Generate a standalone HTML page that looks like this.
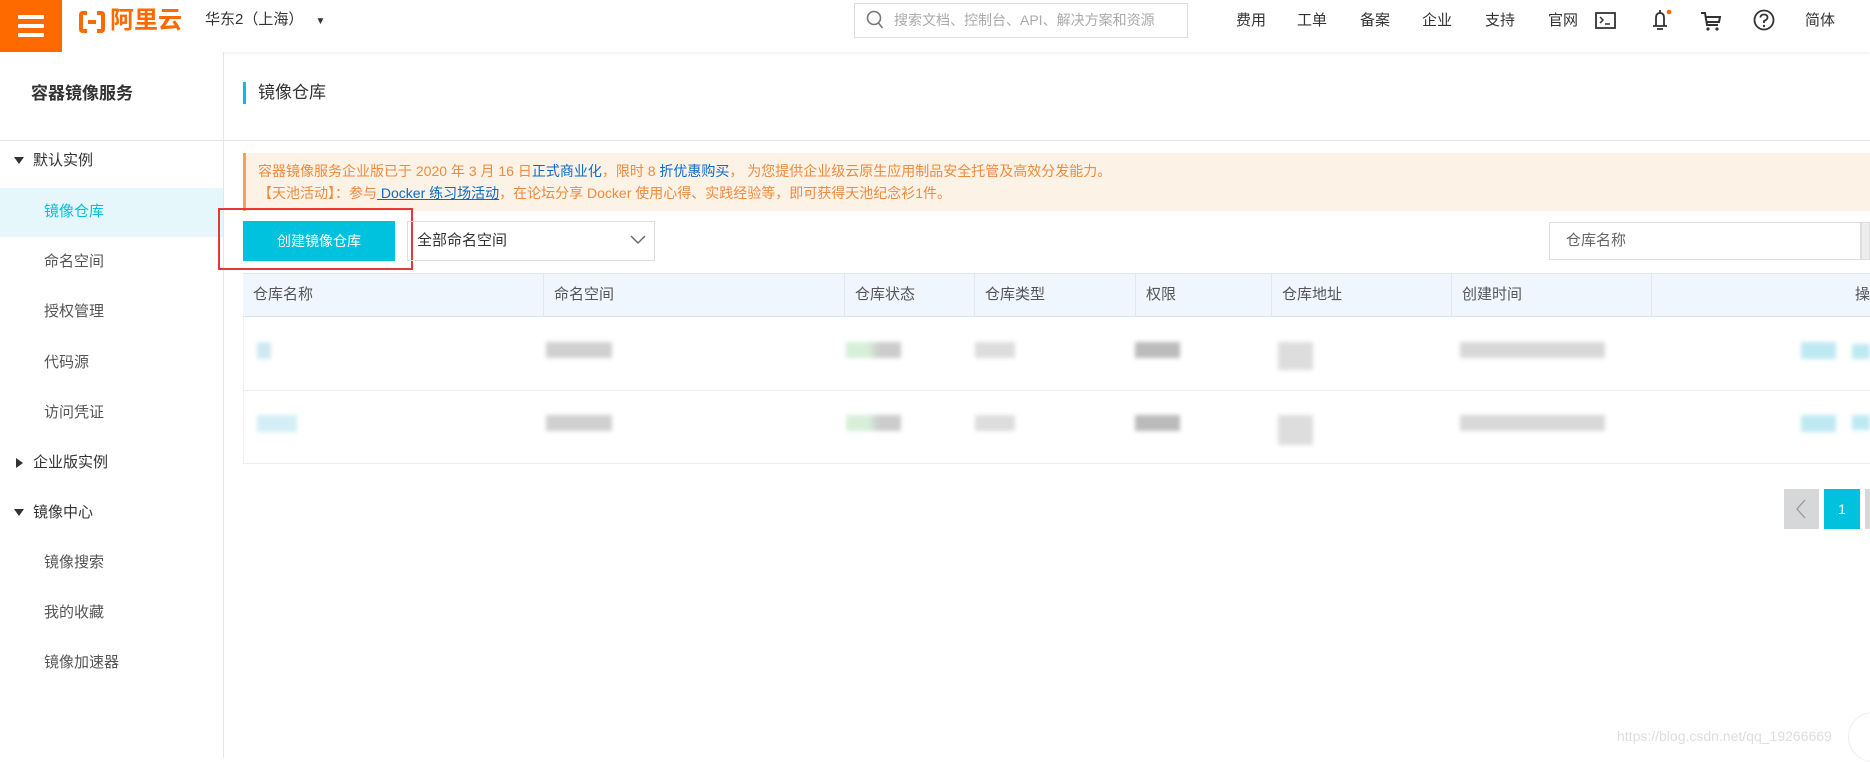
<!DOCTYPE html>
<html><head><meta charset="utf-8"><style>
*{box-sizing:border-box;margin:0;padding:0}
body{width:1870px;height:758px;overflow:hidden;background:#fff;font-family:"Liberation Sans","Noto Sans CJK SC",sans-serif;color:#333;font-size:14px;position:relative}
.a{position:absolute}
.hdr{left:0;top:0;width:1870px;height:52px;background:#fff;box-shadow:0 1px 4px rgba(0,0,0,.08)}
.menu{left:0;top:0;width:62px;height:52px;background:#ff6a00}
.menu i{position:absolute;left:18px;width:26px;height:4px;background:#fff;border-radius:1px}
.nav{top:0;line-height:42px;font-size:15px;color:#333}
.side{left:0;top:52px;width:224px;height:706px;border-right:1px solid #e5e5e5;background:#fff}
.si{left:0;width:223px;height:48px;line-height:48px;padding-left:44px;font-size:15px;color:#555}
.sg{padding-left:33px;color:#333}
.tri{position:absolute;left:14px;top:20px;width:0;height:0;border-left:5px solid transparent;border-right:5px solid transparent;border-top:7px solid #333}
.trr{left:16px;top:19px;border-top:5px solid transparent;border-bottom:5px solid transparent;border-left:7px solid #333;border-right:0}
.blur{position:absolute;filter:blur(2px)}
.th{top:273px;height:44px;line-height:44px;font-size:15px;color:#555;border-left:1px solid #dde8f5;padding-left:10px}
</style></head><body>
<div class="a hdr"></div>
<div class="a menu"><i style="top:15px"></i><i style="top:24px"></i><i style="top:33px"></i></div>
<svg class="a" style="left:78px;top:10px" width="28" height="24" viewBox="0 0 28 24"><path d="M9 3H5Q3 3 3 5V19Q3 21 5 21H9M19 3H23Q25 3 25 5V19Q25 21 23 21H19M10 12H18" fill="none" stroke="#ff6a00" stroke-width="4"/></svg>
<div class="a" style="left:110px;top:6px;font-size:24px;font-weight:bold;color:#ff6a00;line-height:30px">阿里云</div>
<div class="a nav" style="left:205px;line-height:40px">华东2（上海） <span style="font-size:10px;margin-left:8px">▼</span></div>
<div class="a" style="left:854px;top:3px;width:334px;height:35px;border:1px solid #ddd;"></div>
<svg class="a" style="left:866px;top:10px" width="18" height="20"><circle cx="8" cy="8" r="6.5" fill="none" stroke="#777" stroke-width="1.6"/><path d="M12.5 13l4 5" stroke="#777" stroke-width="1.6"/></svg>
<div class="a" style="left:894px;top:3px;line-height:35px;color:#aaa;font-size:14px">搜索文档、控制台、API、解决方案和资源</div>
<div class="a nav" style="left:1236px">费用</div>
<div class="a nav" style="left:1297px">工单</div>
<div class="a nav" style="left:1360px">备案</div>
<div class="a nav" style="left:1422px">企业</div>
<div class="a nav" style="left:1485px">支持</div>
<div class="a nav" style="left:1548px">官网</div>
<svg class="a" style="left:1595px;top:11px" width="22" height="20"><rect x="1" y="2" width="19" height="15" fill="none" stroke="#333" stroke-width="1.8"/><path d="M5 6l3 3-3 3M10 13h5" fill="none" stroke="#333" stroke-width="1.5"/></svg>
<svg class="a" style="left:1649px;top:8px" width="24" height="24"><path d="M7 18V10Q7 5 11 5Q15 5 15 10V18M4 18H18M8 21H14M11 2V5" fill="none" stroke="#333" stroke-width="1.8"/><circle cx="20" cy="4" r="2.3" fill="#ff6a00"/></svg>
<svg class="a" style="left:1700px;top:10px" width="22" height="22"><path d="M1 3H5L7 15H18M6 7H20L19 12H7" fill="none" stroke="#333" stroke-width="2"/><circle cx="8" cy="19" r="1.6" fill="#333"/><circle cx="17" cy="19" r="1.6" fill="#333"/></svg>
<svg class="a" style="left:1753px;top:9px" width="22" height="22"><circle cx="11" cy="11" r="9.5" fill="none" stroke="#333" stroke-width="1.8"/><path d="M7.5 8.5Q7.5 5.5 11 5.5Q14.5 5.5 14.5 8.5Q14.5 10.5 11 12V14" fill="none" stroke="#333" stroke-width="1.8"/><circle cx="11" cy="17" r="1.2" fill="#333"/></svg>
<div class="a nav" style="left:1805px">简体</div>

<div class="a side"></div>
<div class="a" style="left:31px;top:80px;font-size:17px;font-weight:bold;color:#333;line-height:28px">容器镜像服务</div>
<div class="a" style="left:0;top:140px;width:1870px;height:1px;background:#e5e5e5"></div>
<div class="a si sg" style="top:137px"><span class="tri"></span>默认实例</div>
<div class="a si" style="top:188px;height:49px;background:#e6f7fb;color:#00c1de">镜像仓库</div>
<div class="a si" style="top:238px">命名空间</div>
<div class="a si" style="top:288px">授权管理</div>
<div class="a si" style="top:339px">代码源</div>
<div class="a si" style="top:389px">访问凭证</div>
<div class="a si sg" style="top:439px"><span class="tri trr"></span>企业版实例</div>
<div class="a si sg" style="top:489px"><span class="tri"></span>镜像中心</div>
<div class="a si" style="top:539px">镜像搜索</div>
<div class="a si" style="top:589px">我的收藏</div>
<div class="a si" style="top:639px">镜像加速器</div>

<div class="a" style="left:243px;top:82px;width:3px;height:22px;background:#00c1de"></div>
<div class="a" style="left:258px;top:80px;font-size:17px;color:#333;line-height:26px">镜像仓库</div>

<div class="a" style="left:243px;top:153px;width:1627px;height:58px;background:#fdf2e6;border-left:3px solid #f7a14a"></div>
<div class="a" style="left:258px;top:160px;font-size:14px;line-height:22px;color:#f08a3c">容器镜像服务企业版已于 2020 年 3 月 16 日<span style="color:#0a6bc6">正式商业化</span>，限时 8 <span style="color:#0a6bc6">折优惠购买</span>， 为您提供企业级云原生应用制品安全托管及高效分发能力。<br>【天池活动】：参与<u style="color:#0a6bc6"> Docker 练习场活动</u>，在论坛分享 Docker 使用心得、实践经验等，即可获得天池纪念衫1件。</div>

<div class="a" style="left:218px;top:208px;width:195px;height:62px;border:2px solid #e8373b"></div>
<div class="a" style="left:243px;top:221px;width:152px;height:40px;background:#00c1de;color:#fff;text-align:center;line-height:40px;font-size:14px">创建镜像仓库</div>
<div class="a" style="left:407px;top:221px;width:248px;height:40px;border:1px solid #ddd;line-height:38px;padding-left:9px;font-size:15px">全部命名空间</div>
<svg class="a" style="left:630px;top:234px" width="16" height="12"><path d="M1 2l7 7 7-7" fill="none" stroke="#666" stroke-width="1.4"/></svg>
<div class="a" style="left:1549px;top:222px;width:312px;height:38px;border:1px solid #ddd;line-height:36px;padding-left:16px;color:#666;font-size:15px">仓库名称</div>
<div class="a" style="left:1861px;top:222px;width:9px;height:38px;background:#eee;border:1px solid #ddd"></div>

<div class="a" style="left:243px;top:273px;width:1627px;height:44px;background:#eff6fe;border-top:1px solid #dde8f5;border-bottom:1px solid #d5e3f2"></div>
<div class="a th" style="left:243px;border:0">仓库名称</div>
<div class="a th" style="left:543px">命名空间</div>
<div class="a th" style="left:844px">仓库状态</div>
<div class="a th" style="left:974px">仓库类型</div>
<div class="a th" style="left:1135px">权限</div>
<div class="a th" style="left:1271px">仓库地址</div>
<div class="a th" style="left:1451px">创建时间</div>
<div class="a th" style="left:1651px;width:219px;padding:0;text-align:right">操</div>
<div class="a" style="left:243px;top:317px;width:1px;height:146px;background:#eee"></div>
<div class="a" style="left:243px;top:390px;width:1627px;height:1px;background:#eee"></div>
<div class="a" style="left:243px;top:463px;width:1627px;height:1px;background:#eee"></div>

<div class="blur" style="left:257px;top:342px;width:14px;height:17px;background:#cde9f2"></div>
<div class="blur" style="left:846px;top:342px;width:55px;height:16px;background:linear-gradient(90deg,#d7efd9 40%,#ccc 60%)"></div>
<div class="blur" style="left:975px;top:342px;width:40px;height:16px;background:#ddd"></div>
<div class="blur" style="left:1135px;top:342px;width:45px;height:16px;background:#bbb"></div>
<div class="blur" style="left:1278px;top:342px;width:35px;height:28px;background:#ddd"></div>
<div class="blur" style="left:1460px;top:342px;width:145px;height:16px;background:#d8d8d8"></div>
<div class="blur" style="left:1801px;top:342px;width:35px;height:17px;background:#bfe9f2"></div>
<div class="blur" style="left:1852px;top:344px;width:18px;height:15px;background:#bfe9f2"></div>
<div class="blur" style="left:257px;top:415px;width:40px;height:17px;background:#d3eef6"></div>
<div class="blur" style="left:546px;top:342px;width:66px;height:16px;background:#d0d0d0"></div>
<div class="blur" style="left:546px;top:415px;width:66px;height:16px;background:#d0d0d0"></div>
<div class="blur" style="left:846px;top:415px;width:55px;height:16px;background:linear-gradient(90deg,#d7efd9 40%,#ccc 60%)"></div>
<div class="blur" style="left:975px;top:415px;width:40px;height:16px;background:#ddd"></div>
<div class="blur" style="left:1135px;top:415px;width:45px;height:16px;background:#bbb"></div>
<div class="blur" style="left:1278px;top:415px;width:35px;height:30px;background:#ddd"></div>
<div class="blur" style="left:1460px;top:415px;width:145px;height:16px;background:#d8d8d8"></div>
<div class="blur" style="left:1801px;top:415px;width:35px;height:17px;background:#bfe9f2"></div>
<div class="blur" style="left:1852px;top:415px;width:18px;height:15px;background:#bfe9f2"></div>

<div class="a" style="left:1784px;top:489px;width:35px;height:40px;background:#d5d7d8"></div>
<svg class="a" style="left:1794px;top:498px" width="14" height="22"><path d="M11 2L3 11l8 9" fill="none" stroke="#999" stroke-width="1.3"/></svg>
<div class="a" style="left:1824px;top:489px;width:36px;height:40px;background:#00c1de;color:#fff;text-align:center;line-height:40px;font-size:14px">1</div>
<div class="a" style="left:1865px;top:489px;width:5px;height:40px;background:#d5d7d8"></div>
<div class="a" style="left:1617px;top:728px;font-size:14px;color:#ddd">https://blog.csdn.net/qq_19266669</div>
<div class="a" style="left:1848px;top:712px;width:50px;height:50px;border-radius:50%;border:1px solid #eee;background:#fff"></div>
</body></html>
